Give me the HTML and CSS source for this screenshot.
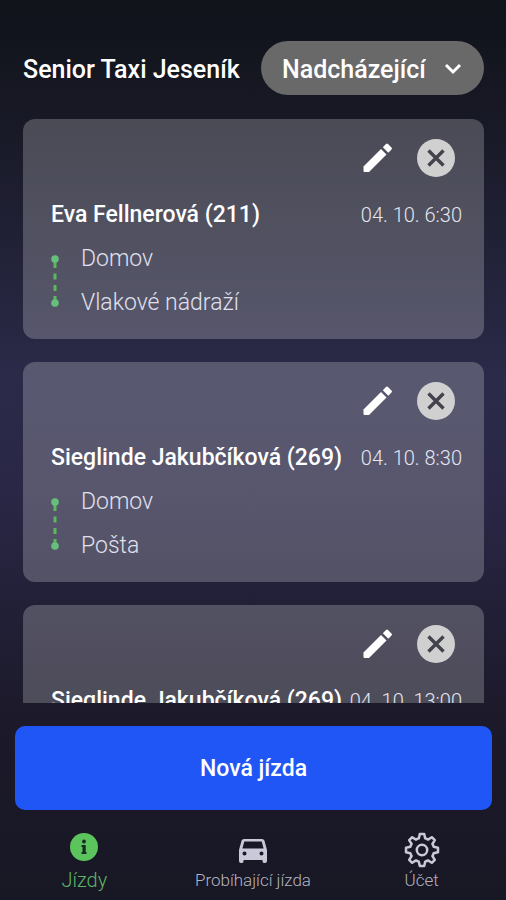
FILE: index.html
```html
<!DOCTYPE html>
<html lang="cs">
<head>
  <meta charset="UTF-8">
  <meta name="viewport" content="width=device-width, initial-scale=1.0">
  <title>Senior Taxi Jeseník</title>
  <link rel="stylesheet" href="styles.css">
</head>
<body>
  <!-- shared icons -->
  <svg class="sprite" aria-hidden="true">
    <symbol id="pencil" viewBox="0 0 30 30">
      <path d="M0.500 23.500 L18 6 L23.500 11.500 L6 29 H1.500 Q0.500 29 0.500 28 Z"/>
      <path d="M19.800 4.200 L23 1 Q24 0 25 1 L28.500 4.500 Q29.500 5.500 28.500 6.500 L25.300 9.700 Z"/>
    </symbol>
    <symbol id="cancel" viewBox="0 0 38 38">
      <circle cx="19" cy="19" r="19" fill="#d0d0d0"/>
      <path d="M11.500 11.500 L26.500 26.500 M26.500 11.500 L11.500 26.500" stroke="#42434d" stroke-width="3.400" fill="none"/>
    </symbol>
    <symbol id="route" viewBox="0 0 8 54">
      <path d="M4 4 V14 M4 19.500 V25.500 M4 31 V37 M4 42 V50" stroke="#5cb85c" stroke-width="3" fill="none"/>
      <circle cx="4" cy="5" r="3.800" fill="#66c07c"/>
      <circle cx="4" cy="49" r="3.800" fill="#66c07c"/>
    </symbol>
  </svg>

  <header class="header">
    <h1 class="title">Senior Taxi Jeseník</h1>
    <div class="filter">
      <select class="filter-select" aria-label="Filtr jízd">
        <option>Nadcházející</option>
      </select>
      <svg class="chevron" viewBox="0 0 18 12"><path d="M2 2 L9 9 L16 2"/></svg>
    </div>
  </header>

  <main class="rides">
    <article class="card">
      <div class="actions">
        <button class="icon-button" aria-label="Upravit"><svg class="pencil"><use href="#pencil"/></svg></button>
        <button class="icon-button" aria-label="Zrušit"><svg class="cancel"><use href="#cancel"/></svg></button>
      </div>
      <div class="ride-head">
        <h2 class="name">Eva Fellnerová (211)</h2>
        <time class="time">04. 10. 6:30</time>
      </div>
      <div class="route">
        <svg class="route-line"><use href="#route"/></svg>
        <ul class="stops">
          <li>Domov</li>
          <li>Vlakové nádraží</li>
        </ul>
      </div>
    </article>

    <article class="card">
      <div class="actions">
        <button class="icon-button" aria-label="Upravit"><svg class="pencil"><use href="#pencil"/></svg></button>
        <button class="icon-button" aria-label="Zrušit"><svg class="cancel"><use href="#cancel"/></svg></button>
      </div>
      <div class="ride-head">
        <h2 class="name">Sieglinde Jakubčíková (269)</h2>
        <time class="time">04. 10. 8:30</time>
      </div>
      <div class="route">
        <svg class="route-line"><use href="#route"/></svg>
        <ul class="stops">
          <li>Domov</li>
          <li>Pošta</li>
        </ul>
      </div>
    </article>

    <article class="card">
      <div class="actions">
        <button class="icon-button" aria-label="Upravit"><svg class="pencil"><use href="#pencil"/></svg></button>
        <button class="icon-button" aria-label="Zrušit"><svg class="cancel"><use href="#cancel"/></svg></button>
      </div>
      <div class="ride-head">
        <h2 class="name">Sieglinde Jakubčíková (269)</h2>
        <time class="time">04. 10. 13:00</time>
      </div>
    </article>
  </main>

  <button class="new-ride">Nová jízda</button>

  <nav class="tabs">
    <a class="tab active" href="#jizdy">
      <svg class="tab-icon" viewBox="0 0 36 36">
        <circle cx="18" cy="15" r="14" fill="#5cc45c"/>
        <circle cx="18" cy="9.500" r="1.900" fill="#1a2a24"/>
        <path d="M15.500 13 H19.700 V20 H20.500 V22 H15.500 V20 H16.500 V15 H15.500 Z" fill="#1a2a24"/>
      </svg>
      <span class="tab-label">Jízdy</span>
    </a>
    <a class="tab" href="#probihajici">
      <svg class="tab-icon" viewBox="0 0 36 36">
        <path fill="#c9c9da" fill-rule="evenodd" d="M9 7 H27 Q28.800 7 29.400 8.600 L32 18 V29 Q32 31 30 31 H29 Q27.500 31 27.500 29 V28 H8.500 V29 Q8.500 31 7 31 H6 Q4 31 4 29 V18 L6.600 8.600 Q7.200 7 9 7 Z M9.300 9.500 L7.400 16.500 H28.600 L26.700 9.500 Z M9.500 19.500 A2 2 0 1 0 9.500 23.500 A2 2 0 1 0 9.500 19.500 Z M26.500 19.500 A2 2 0 1 0 26.500 23.500 A2 2 0 1 0 26.500 19.500 Z"/>
      </svg>
      <span class="tab-label">Probíhající jízda</span>
    </a>
    <a class="tab" href="#ucet">
      <svg class="tab-icon" viewBox="0 0 36 36">
        <g fill="none" stroke="#c9c9da" stroke-width="2.500" stroke-linejoin="round">
          <path d="M15.800 2 H20.200 L21.200 6.400 Q22.800 6.800 24 7.600 L27.800 5.200 L30.800 8.200 L28.400 12 Q29.200 13.200 29.600 14.800 L34 15.800 V20.200 L29.600 21.200 Q29.200 22.800 28.400 24 L30.800 27.800 L27.800 30.800 L24 28.400 Q22.800 29.200 21.200 29.600 L20.200 34 H15.800 L14.800 29.600 Q13.200 29.200 12 28.400 L8.200 30.800 L5.200 27.800 L7.600 24 Q6.800 22.800 6.400 21.200 L2 20.200 V15.800 L6.400 14.800 Q6.800 13.200 7.600 12 L5.200 8.200 L8.200 5.200 L12 7.600 Q13.200 6.800 14.800 6.400 Z"/>
          <circle cx="18" cy="18" r="5.200"/>
        </g>
      </svg>
      <span class="tab-label">Účet</span>
    </a>
  </nav>
</body>
</html>
```
FILE: styles.css
```css
* {
  box-sizing: border-box;
}
body {
  margin: 0;
  height: 100vh;
  display: flex;
  flex-direction: column;
  overflow: hidden;
  font-family: Roboto, sans-serif;
  color: #ffffff;
  background: linear-gradient(#10131a 0%, #171824 12%, #2b2a49 42%, #292745 55%, #1c1a2b 78%, #181724 100%);
}
h1, h2, ul {
  margin: 0;
  padding: 0;
}
button {
  border: none;
  font-family: inherit;
  color: inherit;
  cursor: pointer;
}
.sprite {
  display: none;
}
.header {
  display: flex;
  justify-content: space-between;
  align-items: center;
  padding: 41px 22px 24px 23px;
}
.title {
  padding-top: 2px;
  font-size: 25px;
  font-weight: 500;
  white-space: nowrap;
}
.filter {
  position: relative;
}
.filter-select {
  appearance: none;
  display: block;
  height: 54px;
  padding: 2px 58px 0 21px;
  border: none;
  border-radius: 27px;
  background-color: #696969;
  color: #ffffff;
  font-family: inherit;
  font-size: 25px;
  font-weight: 500;
}
.chevron {
  position: absolute;
  top: 22px;
  right: 22px;
  width: 18px;
  height: 12px;
  fill: none;
  stroke: #ffffff;
  stroke-width: 3;
  pointer-events: none;
}
.rides {
  flex: 1;
  min-height: 0;
  overflow: hidden;
  display: flex;
  flex-direction: column;
  gap: 23px;
  padding: 0 22px 0 23px;
}
.card {
  flex-shrink: 0;
  padding: 20px 22px 14px 28px;
  border-radius: 12px;
  background-color: rgba(255, 255, 255, 0.22);
}
.actions {
  display: flex;
  justify-content: flex-end;
  align-items: center;
  gap: 24px;
  padding-right: 7px;
}
.icon-button {
  display: flex;
  padding: 0;
  background: none;
}
.pencil {
  width: 30px;
  height: 30px;
  fill: #ffffff;
}
.cancel {
  width: 38px;
  height: 38px;
}
.ride-head {
  display: flex;
  justify-content: space-between;
  align-items: center;
  padding: 23px 0 7px;
  line-height: 30px;
  white-space: nowrap;
}
.name {
  font-size: 23px;
  font-weight: 500;
}
.time {
  font-size: 20px;
  font-weight: 300;
  color: #e6e6f0;
}
.route {
  display: flex;
  align-items: center;
  gap: 22px;
}
.route-line {
  width: 8px;
  height: 54px;
}
.stops {
  list-style: none;
  font-size: 23px;
  font-weight: 300;
  line-height: 44px;
  color: #e0e0ee;
}
.new-ride {
  flex-shrink: 0;
  height: 84px;
  margin: 23px 14px 0 15px;
  border-radius: 10px;
  background-color: #2156f6;
  font-size: 23px;
  font-weight: 500;
}
.tabs {
  display: grid;
  grid-template-columns: repeat(3, 1fr);
  height: 90px;
  padding-top: 22px;
}
.tab {
  display: flex;
  flex-direction: column;
  align-items: center;
  text-decoration: none;
  font-size: 17px;
  font-weight: 300;
  color: #b4b4c2;
}
.tab-icon {
  width: 36px;
  height: 36px;
}
.tab-label {
  line-height: 24px;
}
.active {
  font-size: 20px;
  color: #5cb565;
}
```
